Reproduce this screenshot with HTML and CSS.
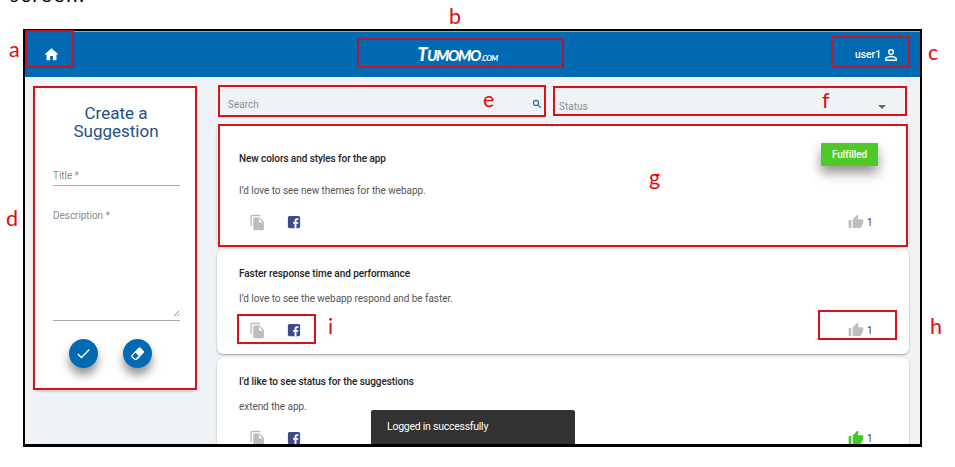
FILE: index.html
```html
<!DOCTYPE html>
<html lang="en">
<head>
<meta charset="utf-8">
<title>Tumomo suggestions</title>
<link rel="stylesheet" href="styles.css">
</head>
<body>
<svg class="defs" aria-hidden="true">
  <symbol id="copy" viewBox="0 0 24 24"><path d="M16 1H4c-1.1 0-2 .9-2 2v14h2V3h12V1zm-1 4l6 6v10c0 1.1-.9 2-2 2H7.990C6.890 23 6 22.100 6 21l.010-14c0-1.100.890-2 1.990-2h7zm-1 7h5.500L14 6.500V12z"/></symbol>
  <symbol id="facebook" viewBox="0 0 24 24"><rect x="1.500" y="1.500" width="21" height="21" rx="3"/><path fill="#fff" d="M13 22.500v-7.500h-2.500v-3H13v-2c0-2.800 1.600-4.300 4-4.300h2.500v3h-1.700c-1.200 0-1.600.6-1.600 1.500V12h3.300l-.5 3h-2.800v7.500z"/></symbol>
  <symbol id="thumb" viewBox="0 0 24 24"><path d="M1 21h4V9H1v12zm22-11c0-1.100-.9-2-2-2h-6.310l.950-4.570.030-.320c0-.410-.170-.790-.440-1.060L14.170 1 7.590 7.590C7.220 7.950 7 8.450 7 9v10c0 1.100.9 2 2 2h9c.830 0 1.540-.5 1.840-1.220l3.020-7.050c.090-.230.140-.470.140-.730v-2z"/></symbol>
</svg>
<p class="intro">screen.</p>
<div class="app">
  <header class="bar">
    <svg class="home" viewBox="0 0 24 24"><path d="M10 20v-6h4v6h5v-8h3L12 3 2 12h3v8z"/></svg>
    <div class="logo"><span class="logo-t">T</span><span class="logo-name">UMOMO</span><span class="logo-com">.COM</span></div>
    <div class="user"><span>user1</span>
      <svg viewBox="0 0 24 24"><path d="M12 5.900a2.100 2.100 0 1 1 0 4.200 2.100 2.100 0 0 1 0-4.200m0 9c2.970 0 6.100 1.460 6.100 2.100v1.100H5.900V17c0-.640 3.130-2.100 6.100-2.100M12 4a4 4 0 1 0 0 8 4 4 0 0 0 0-8zm0 9c-2.670 0-8 1.340-8 4v3h16v-3c0-2.660-5.330-4-8-4z"/></svg>
    </div>
  </header>
  <div class="content">
    <aside class="create">
      <h1>Create a<br>Suggestion</h1>
      <div class="field title-field">Title *</div>
      <div class="field desc-field">Description *
        <svg class="grip" viewBox="0 0 8 8"><path d="M1 7L7 1M5 7l2-2"/></svg>
      </div>
      <div class="actions">
        <span class="fab"><svg viewBox="0 0 24 24"><path d="M9 16.170L4.830 12l-1.420 1.410L9 19 21 7l-1.410-1.410z"/></svg></span>
        <span class="fab"><svg viewBox="0 0 24 24"><path fill-rule="evenodd" d="M13.500 3.800a2 2 0 0 1 2.800 0l4.500 4.500a2 2 0 0 1 0 2.800l-8.300 8.600a4.500 4.500 0 0 1-6.400 0l-2.400-2.400a2.300 2.300 0 0 1 0-3.200zM9 10.800l-3.600 3.600a1.500 1.500 0 0 0 0 2l2.300 2.300a1.700 1.700 0 0 0 2.500 0l3.500-3.500z"/></svg></span>
      </div>
    </aside>
    <main class="list">
      <div class="filters">
        <div class="search"><span>Search</span><svg viewBox="0 0 24 24"><circle cx="9.500" cy="9.500" r="6"/><path d="M14 14l7 7"/></svg></div>
        <div class="status"><span>Status</span><i class="caret"></i></div>
      </div>
      <article class="card first">
        <span class="badge">Fulfilled</span>
        <h2>New colors and styles for the app</h2>
        <p>I’d love to see new themes for the webapp.</p>
        <div class="foot"><svg class="copy"><use href="#copy"/></svg><svg class="fb"><use href="#facebook"/></svg><svg class="like"><use href="#thumb"/></svg><span>1</span></div>
      </article>
      <article class="card">
        <h2>Faster response time and performance</h2>
        <p>I’d love to see the webapp respond and be faster.</p>
        <div class="foot"><svg class="copy"><use href="#copy"/></svg><svg class="fb"><use href="#facebook"/></svg><svg class="like"><use href="#thumb"/></svg><span>1</span></div>
      </article>
      <article class="card">
        <h2>I’d like to see status for the suggestions</h2>
        <p>extend the app.</p>
        <div class="foot"><svg class="copy"><use href="#copy"/></svg><svg class="fb"><use href="#facebook"/></svg><svg class="like liked"><use href="#thumb"/></svg><span>1</span></div>
      </article>
    </main>
  </div>
  <div class="toast">Logged in successfully</div>
</div>
<div class="mark mark-a"></div><div class="mark mark-b"></div><div class="mark mark-c"></div>
<div class="mark mark-d"></div><div class="mark mark-e"></div><div class="mark mark-f"></div>
<div class="mark mark-g"></div><div class="mark mark-h"></div><div class="mark mark-i"></div>
<span class="key key-a">a</span><span class="key key-b">b</span><span class="key key-c">c</span>
<span class="key key-d">d</span><span class="key key-e">e</span><span class="key key-f">f</span>
<span class="key key-g">g</span><span class="key key-h">h</span><span class="key key-i">i</span>
</body>
</html>
```
FILE: styles.css
```css
* { box-sizing: border-box; }
body { margin: 0; position: relative; width: 955px; height: 467px; overflow: hidden; background: #fff; font-family: Roboto, sans-serif; font-size: 10px; color: #444; }
.defs { position: absolute; width: 0; height: 0; }
h1, h2, p { margin: 0; font-weight: 400; }
svg { display: block; flex: none; }
.intro { height: 29px; padding-left: 10px; font: 20px/20px Lato, sans-serif; color: #000; letter-spacing: 2px; margin-top: -16px; margin-bottom: 16px; }
.app { position: relative; width: 899px; height: 418px; margin-left: 23px; border: 2px solid #000; border-bottom-width: 3px; background: #eff3f6; overflow: hidden; }
.bar { height: 46px; display: flex; align-items: center; justify-content: space-between; background: #016ab3; padding: 0 22px 0 18px; border-top: 1px solid #9ba8b1; color: #fff; }
.home { width: 17px; height: 17px; fill: #fff; }
.user { width: 43px; display: flex; align-items: center; gap: 3px; font-size: 10.3px; font-weight: 500; }
.user span { width: 25px; }
.user svg { width: 18px; height: 18px; margin-left: -1px; fill: #fff; }
.logo { display: flex; align-items: baseline; margin-left: 0; margin-top: 4px; font-family: Lato, sans-serif; font-style: italic; font-weight: 900; line-height: 20px; }
.logo-t { width: 9.500px; font-size: 18px; }
.logo-name { font-size: 15px; letter-spacing: -1.300px; }
.logo-com { margin-left: 1px; font-size: 7.500px; letter-spacing: -.5px; }
.content { display: flex; gap: 20px; padding: 8px 11px 0 8px; }
.create { width: 164px; height: 304px; padding: 18px 17px 0 20px; border-radius: 6px; background: #fff; box-shadow: 0 2px 2px rgba(0,0,0,.15); margin-top: 1px; }
.create h1 { margin-left: -1px; font-size: 17px; line-height: 18px; color: #245088; text-align: center; }
.field { border-bottom: 1px solid #aaa; color: #8b8b8b; font-size: 10px; line-height: 12px; letter-spacing: -.05px; }
.title-field { margin-top: 30px; height: 16px; }
.desc-field { position: relative; margin-top: 24px; height: 111px; }
.grip { position: absolute; right: 0; bottom: 3px; width: 7px; height: 7px; stroke: #777; fill: none; }
.actions { display: flex; gap: 25px; padding: 18px 0 0 16px; }
.fab { width: 29px; height: 29px; display: grid; place-items: center; border-radius: 50%; background: #016ab3; box-shadow: 0 7px 10px rgba(0,0,0,.42); }
.fab svg { width: 17px; height: 17px; fill: #fff; }
.list { width: 692px; }
.filters { display: flex; justify-content: space-between; height: 38px; padding: 0 23px 0 11px; color: #8d9194; }
.search { width: 317px; height: 31px; padding: 13px 3px 0 0; display: flex; justify-content: space-between; border-bottom: 1px solid #aaa; line-height: 13px; }
.search svg { width: 10px; height: 10px; margin-top: 1px; fill: none; stroke: #2474b3; stroke-width: 3; }
.status { width: 328px; padding: 15px 0 0; display: flex; justify-content: space-between; line-height: 13px; }
.status span { margin-left: 1px; }
.caret { border: 4px solid transparent; border-top-color: #666; height: 0; margin-top: 5px; }
.card { position: relative; height: 104px; margin-bottom: 4px; padding: 17px 34px 0 22px; border-radius: 6px; background: #fff; box-shadow: 0 1px 2px rgba(0,0,0,.35); }
.card h2 { font-size: 10px; line-height: 14px; font-weight: 500; color: #222; white-space: nowrap; letter-spacing: -.07px; }
.card p { margin-top: 11px; font-size: 10px; line-height: 14px; color: #555; letter-spacing: -.05px; }
.first { height: 123px; }
.card.first { padding-top: 29px; }
.card.first p { margin-top: 18px; }
.foot { display: flex; align-items: center; height: 18px; margin-top: 15px; padding-left: 10px; fill: #bbbebf; }
.foot span { width: 8px; font-size: 10px; }
.copy { width: 17px; height: 17px; }
.fb { width: 14px; height: 14px; margin-left: 21px; fill: #3e4c8b; }
.like { width: 16px; height: 16px; margin-left: auto; margin-right: 3px; }
.liked { fill: #43c729; }
.badge { position: absolute; top: 20px; right: 31px; width: 57px; height: 23px; background: #4fc927; color: #fff; text-align: center; font: 500 10px/23px Roboto, sans-serif; letter-spacing: -.05px; box-shadow: 0 7px 12px rgba(0,0,0,.42); }
.toast { position: absolute; left: 346px; top: 379px; width: 204px; height: 36px; padding-left: 16px; background: #323232; color: #fff; border-radius: 2px 2px 0 0; font: 10.500px/34px Roboto, sans-serif; letter-spacing: -.25px; }
.mark { position: absolute; border: 2px solid #d9121a; }
.mark-a { left: 25px; top: 30px; width: 49px; height: 38px; border-color: #c31527; }
.mark-b { left: 357px; top: 38px; width: 207px; height: 30px; border-color: #a8193d; border-bottom-color: #d0141f; }
.mark-c { left: 831px; top: 36px; width: 79px; height: 32px; border-color: #b81c35; }
.mark-d { left: 33px; top: 86px; width: 164px; height: 304px; }
.mark-e { left: 218px; top: 85px; width: 328px; height: 32px; }
.mark-f { left: 553px; top: 86px; width: 354px; height: 30px; }
.mark-g { left: 218px; top: 124px; width: 690px; height: 123px; }
.mark-h { left: 818px; top: 310px; width: 79px; height: 30px; }
.mark-i { left: 237px; top: 314px; width: 79px; height: 30px; }
.key { position: absolute; font: 21.500px/24px Lato, "Open Sans", sans-serif; color: #e5060c; }
.key-a { left: 9px; top: 37px; }
.key-b { left: 449px; top: 4px; }
.key-c { left: 928px; top: 40px; }
.key-d { left: 6px; top: 206px; }
.key-e { left: 483px; top: 87px; }
.key-f { left: 822px; top: 88px; }
.key-g { left: 649px; top: 165px; }
.key-h { left: 930px; top: 314px; }
.key-i { left: 328px; top: 314px; }
```
